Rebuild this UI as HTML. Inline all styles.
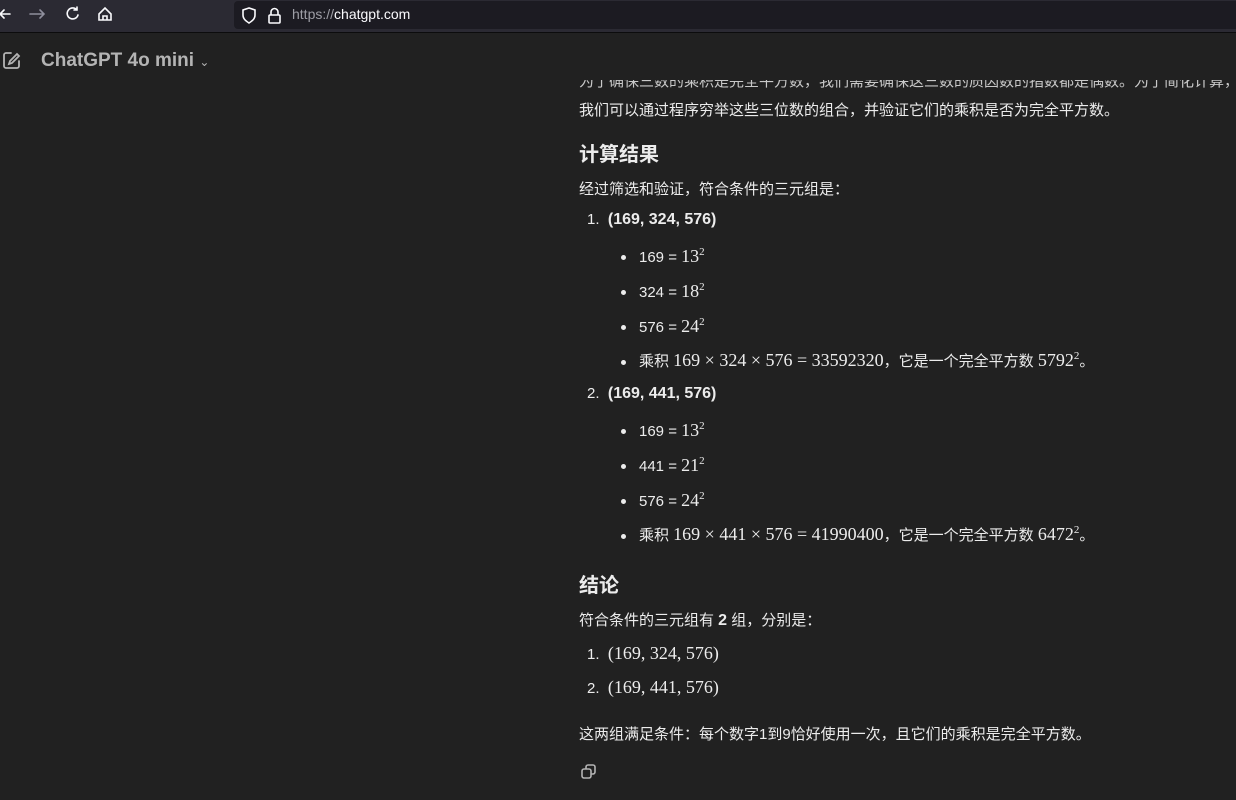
<!DOCTYPE html><html><head><meta charset="utf-8"><style>
body{margin:0;width:1236px;height:800px;background:#212121;overflow:hidden;font-family:"Liberation Sans","Noto Sans CJK SC",sans-serif;color:#ececec;position:relative}
.tb{position:absolute;left:0;top:0;width:1236px;height:32px;background:#2b2a33;border-bottom:1px solid #0c0c0d}
.url{position:absolute;left:234px;top:1px;width:1010px;height:28px;background:#1c1b22;border-radius:4px}
.ab{position:absolute;font-size:15px}
.t{position:absolute;left:579px;font-size:15px;white-space:nowrap}
.m{font-family:"Liberation Serif",serif;font-size:18px}
sup{font-size:11px;vertical-align:7px;font-family:"Liberation Serif",serif}
b{font-weight:bold;font-size:16px}
.h{font-size:20px;font-weight:bold}
.dot{position:absolute;left:621px;width:5px;height:5px;border-radius:50%;background:#ececec}
</style></head><body>
<div class="tb"><div class="url"></div>
<svg style="position:absolute;left:0;top:6px" width="130" height="20" fill="none" stroke-width="1.6" stroke-linecap="round">
<path d="M10 8H0M4 4L0 8L4 12" stroke="#fbfbfe"/>
<path d="M30 8H44M40 4L44 8L40 12" stroke="#8f8f9d"/>
<path d="M77 4A5.5 5.5 0 1 0 78 9M77 1V4H74" stroke="#fbfbfe"/>
<path d="M99 8L105 2L111 8V14H99Z M103 14V10H107V14" stroke="#fbfbfe"/>
</svg>
<svg style="position:absolute;left:240px;top:6px" width="45" height="20" fill="none" stroke="#fbfbfe" stroke-width="1.6">
<path d="M9 2L3 4V9C3 13 6 15 9 17C12 15 15 13 15 9V4Z"/>
<rect x="29" y="9" width="11" height="8" rx="1"/><path d="M31 9V6A3.5 3.5 0 0 1 38 6V9"/>
</svg>
<div class="ab" style="left:292px;top:6px;font-size:14px;color:#9e9ea6">https://<span style="color:#fbfbfe">chatgpt.com</span></div>
</div>
<svg style="position:absolute;left:2px;top:51px" width="20" height="20" fill="none" stroke="#b4b4b4" stroke-width="1.8" stroke-linecap="round"><path d="M9 2H4A2 2 0 0 0 2 4V15A2 2 0 0 0 4 17H15A2 2 0 0 0 17 15V10"/><path d="M15 3L8 10L7 13L10 12L17 5Z"/></svg>
<div class="ab" style="left:41px;top:50px;font-size:19px;font-weight:bold;color:#b4b4b4">ChatGPT 4o mini <span style="font-size:12px;font-weight:normal">&#8964;</span></div>
<div class="t" style="top:70px;color:#c8c8c8;clip-path:inset(10px 0 0 0)">为了确保三数的乘积是完全平方数，我们需要确保这三数的质因数的指数都是偶数。为了简化计算，</div>
<div class="t" style="top:99px">我们可以通过程序穷举这些三位数的组合，并验证它们的乘积是否为完全平方数。</div>
<div class="t h" style="top:138px">计算结果</div>
<div class="t" style="top:178px">经过筛选和验证，符合条件的三元组是：</div>
<div class="t" style="top:211px;left:587px">1.&nbsp; <b>(169, 324, 576)</b></div>
<div class="dot" style="top:255px"></div><div class="t" style="left:639px;top:246px">169 = <span class="m">13</span><sup>2</sup></div>
<div class="dot" style="top:290px"></div><div class="t" style="left:639px;top:281px">324 = <span class="m">18</span><sup>2</sup></div>
<div class="dot" style="top:325px"></div><div class="t" style="left:639px;top:316px">576 = <span class="m">24</span><sup>2</sup></div>
<div class="dot" style="top:360px"></div><div class="t" style="left:639px;top:350px">乘积 <span class="m">169 × 324 × 576 = 33592320</span>，它是一个完全平方数 <span class="m">5792</span><sup>2</sup>。</div>
<div class="t" style="top:385px;left:587px">2.&nbsp; <b>(169, 441, 576)</b></div>
<div class="dot" style="top:429px"></div><div class="t" style="left:639px;top:420px">169 = <span class="m">13</span><sup>2</sup></div>
<div class="dot" style="top:464px"></div><div class="t" style="left:639px;top:455px">441 = <span class="m">21</span><sup>2</sup></div>
<div class="dot" style="top:499px"></div><div class="t" style="left:639px;top:490px">576 = <span class="m">24</span><sup>2</sup></div>
<div class="dot" style="top:534px"></div><div class="t" style="left:639px;top:524px">乘积 <span class="m">169 × 441 × 576 = 41990400</span>，它是一个完全平方数 <span class="m">6472</span><sup>2</sup>。</div>
<div class="t h" style="top:569px">结论</div>
<div class="t" style="top:609px">符合条件的三元组有 <b>2</b> 组，分别是：</div>
<div class="t" style="top:643px;left:587px">1.&nbsp; <span class="m">(169, 324, 576)</span></div>
<div class="t" style="top:677px;left:587px">2.&nbsp; <span class="m">(169, 441, 576)</span></div>
<div class="t" style="top:723px">这两组满足条件：每个数字1到9恰好使用一次，且它们的乘积是完全平方数。</div>
<svg style="position:absolute;left:581px;top:764px" width="16" height="16" fill="none" stroke="#b4b4b4" stroke-width="1.6"><rect x="1" y="5" width="9" height="9" rx="2"/><path d="M5 5V3A2 2 0 0 1 7 1H12A2 2 0 0 1 14 3V8A2 2 0 0 1 12 10H10"/></svg>
</body></html>
